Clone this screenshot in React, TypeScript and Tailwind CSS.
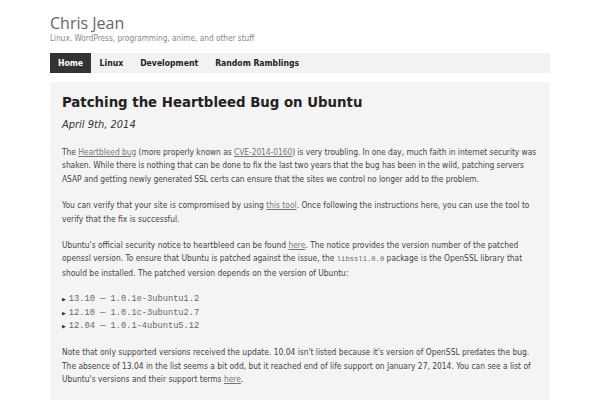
import React from "react";

const navItems = ["Home", "Linux", "Development", "Random Ramblings"];

const versions = [
  ["13.10", "1.0.1e-3ubuntu1.2"],
  ["12.10", "1.0.1c-3ubuntu2.7"],
  ["12.04", "1.0.1-4ubuntu5.12"],
];

function A({ children }: { children: React.ReactNode }) {
  return <a className="text-[#777] underline underline-offset-1">{children}</a>;
}

export default function App() {
  return (
    <div className="min-h-[400px] bg-white font-['DejaVu_Sans_Condensed','DejaVu_Sans',sans-serif]">
      <div className="mx-auto w-[500px] pt-[13px]">
        <header>
          <h1 className="font-['Open_Sans',sans-serif] text-[16px] leading-[20px] text-[#666]">Chris Jean</h1>
          <p className="text-[8.2px] leading-[10px] text-[#888]">Linux, WordPress, programming, anime, and other stuff</p>
        </header>

        <nav className="mt-[10px] flex h-[20px] items-center bg-[#f2f2f2]">
          {navItems.map((item, i) => (
            <a
              key={item}
              className={
                i === 0
                  ? "flex h-full items-center bg-[#333] px-[8px] text-[8.6px] font-bold text-white"
                  : "flex h-full items-center px-[8.5px] text-[8.6px] font-bold text-[#222]"
              }
            >
              {item}
            </a>
          ))}
        </nav>

        <article className="mt-[9px] bg-[#f4f4f4] pl-[12px] pr-[8px] pt-[10px] pb-[20px] text-[8.4px] leading-[13.4px] text-[#444]">
          <h2 className="text-[14.8px] font-bold leading-[20px] text-[#222]">Patching the Heartbleed Bug on Ubuntu</h2>
          <p className="mt-[6px] text-[11px] italic leading-[14px] text-[#333]">April 9th, 2014</p>

          <div className="mt-[14px] flex flex-col gap-[13px]">
            <p className="tracking-[-0.05px]">
              The <A>Heartbleed bug</A> (more properly known as <A>CVE-2014-0160</A>) is very troubling. In one day, much faith in
              internet security was shaken. While there is nothing that can be done to fix the last two years that the bug has been in
              the wild, patching servers ASAP and getting newly generated SSL certs can ensure that the sites we control no longer add
              to the problem.
            </p>
            <p>
              You can verify that your site is compromised by using <A>this tool</A>. Once following the instructions here, you can
              use the tool to verify that the fix is successful.
            </p>
            <p>
              Ubuntu's official security notice to heartbleed can be found <A>here</A>. The notice provides the version number of the
              patched openssl version. To ensure that Ubuntu is patched against the issue, the{" "}
              <code className="font-['Liberation_Mono',monospace] text-[7.2px] text-[#666]">libssl1.0.0</code> package is the OpenSSL
              library that should be installed. The patched version depends on the version of Ubuntu:
            </p>
            <ul className="font-['Liberation_Mono',monospace] text-[8.7px] text-[#666]">
              {versions.map(([v, p]) => (
                <li key={v} className="flex items-center gap-[3px]">
                  <span className="font-['DejaVu_Sans',sans-serif] text-[5px] text-[#333]">▶</span>
                  <span>
                    {v} — {p}
                  </span>
                </li>
              ))}
            </ul>
            <p>
              Note that only supported versions received the update. 10.04 isn't listed because it's version of OpenSSL predates the
              bug. The absence of 13.04 in the list seems a bit odd, but it reached end of life support on January 27, 2014. You can
              see a list of Ubuntu's versions and their support terms <A>here</A>.
            </p>
          </div>
        </article>
      </div>
    </div>
  );
}
